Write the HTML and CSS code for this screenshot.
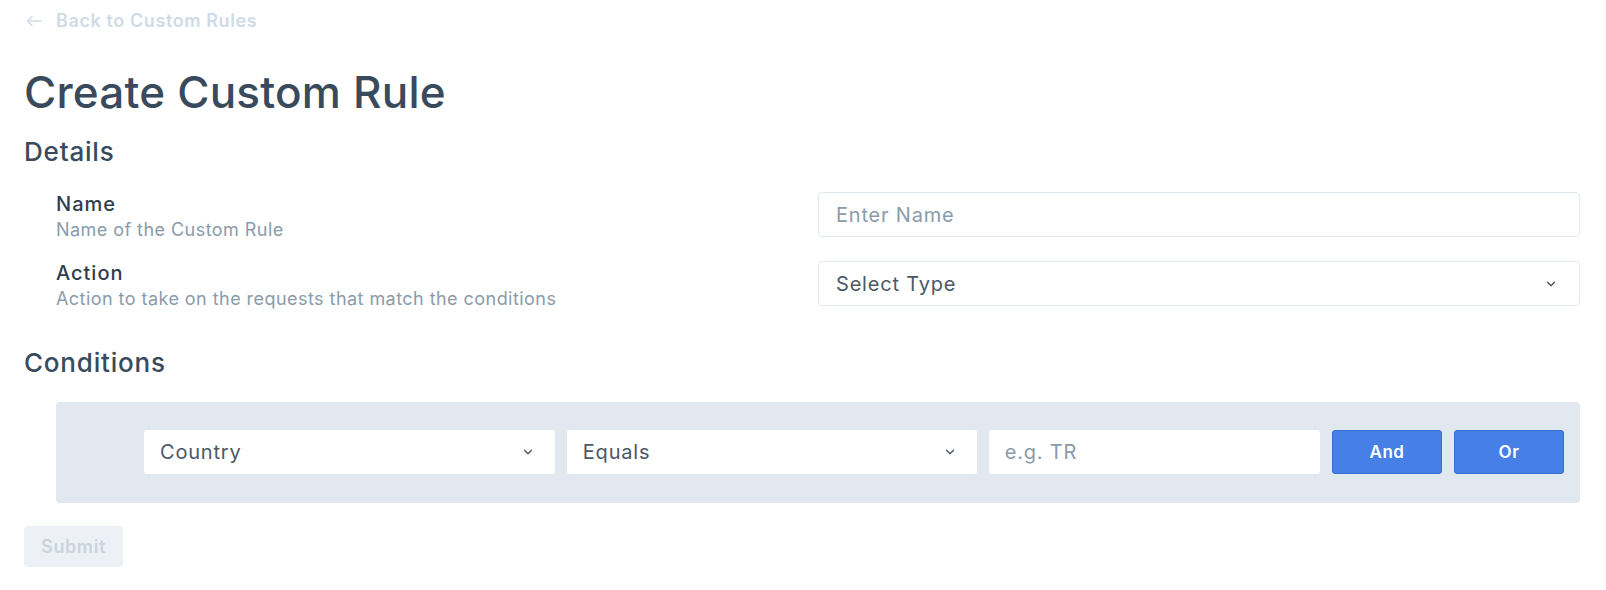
FILE: index.html
```html
<!DOCTYPE html>
<html lang="en">
<head>
<meta charset="utf-8">
<title>Create Custom Rule</title>
<link rel="stylesheet" href="styles.css">
</head>
<body>
<div class="page">
  <a class="back" href="#">
    <svg class="back-arrow" width="16" height="12" viewBox="0 0 16 12" aria-hidden="true"><path d="M15 6H1.5M6 1.5L1.5 6L6 10.5" fill="none" stroke="currentColor" stroke-width="1.5" stroke-linecap="round" stroke-linejoin="round"/></svg>
    <span>Back to Custom Rules</span>
  </a>
  <h1 class="title">Create Custom Rule</h1>

  <h2 class="section details-title">Details</h2>
  <div class="details">
    <div class="row">
      <div class="field-info">
        <div class="field-label">Name</div>
        <div class="field-hint">Name of the Custom Rule</div>
      </div>
      <div class="field-control">
        <div class="input"><span class="placeholder">Enter Name</span></div>
      </div>
    </div>
    <div class="row">
      <div class="field-info">
        <div class="field-label">Action</div>
        <div class="field-hint">Action to take on the requests that match the conditions</div>
      </div>
      <div class="field-control">
        <div class="input select"><span class="value">Select Type</span>
          <svg class="chev" width="10" height="6" viewBox="0 0 10 6" aria-hidden="true"><path d="M1.5 1.2L5 4.7L8.5 1.2" fill="none" stroke="currentColor" stroke-width="1.4" stroke-linecap="round" stroke-linejoin="round"/></svg>
        </div>
      </div>
    </div>
  </div>

  <h2 class="section conditions-title">Conditions</h2>
  <div class="conditions">
    <div class="cond-box">
      <div class="cond-field cond-select w-country"><span class="value">Country</span>
        <svg class="chev" width="10" height="6" viewBox="0 0 10 6" aria-hidden="true"><path d="M1.5 1.2L5 4.7L8.5 1.2" fill="none" stroke="currentColor" stroke-width="1.4" stroke-linecap="round" stroke-linejoin="round"/></svg>
      </div>
      <div class="cond-field cond-select w-op"><span class="value">Equals</span>
        <svg class="chev" width="10" height="6" viewBox="0 0 10 6" aria-hidden="true"><path d="M1.5 1.2L5 4.7L8.5 1.2" fill="none" stroke="currentColor" stroke-width="1.4" stroke-linecap="round" stroke-linejoin="round"/></svg>
      </div>
      <div class="cond-field w-val"><span class="placeholder">e.g. TR</span></div>
      <button class="btn-blue">And</button>
      <button class="btn-blue">Or</button>
    </div>
  </div>

  <button class="submit">Submit</button>
</div>
</body>
</html>
```

FILE: styles.css
```css
* { box-sizing: border-box; }

html, body {
  margin: 0;
  padding: 0;
  background: #ffffff;
}

body {
  font-family: "Inter", "Noto Sans", "Liberation Sans", sans-serif;
  color: #3a4b5c;
}

.page {
  padding: 10px 26px 0 24px;
}

.back {
  display: flex;
  align-items: center;
  gap: 14px;
  height: 21px;
  color: #cfdbe6;
  text-decoration: none;
  font-size: 18px;
  font-weight: 600;
  letter-spacing: 0.6px;
}

.back-arrow {
  margin-left: 2px;
  flex: none;
}

.title {
  margin: 36px 0 0 0;
  font-size: 44px;
  line-height: 50px;
  font-weight: 500;
  color: #384a5c;
  letter-spacing: 0.2px;
}

.section {
  margin: 0;
  font-size: 26px;
  line-height: 30px;
  font-weight: 500;
  color: #384a5c;
  letter-spacing: 0.8px;
}

.details-title {
  margin-top: 20px;
}

.details {
  padding-left: 32px;
  margin-top: 25px;
  display: flex;
  flex-direction: column;
  gap: 17px;
}

.row {
  display: grid;
  grid-template-columns: 1fr 1fr;
  align-items: start;
}

.field-info {
  display: flex;
  flex-direction: column;
}

.field-label {
  font-size: 20px;
  line-height: 24px;
  font-weight: 500;
  color: #2f3d4c;
  letter-spacing: 1px;
}

.field-hint {
  font-size: 18px;
  line-height: 28px;
  color: #8a9bab;
  letter-spacing: 0.45px;
}

.input {
  height: 45px;
  border: 1px solid #e2e8f0;
  border-radius: 4px;
  display: flex;
  align-items: center;
  padding: 0 17px;
  font-size: 20px;
  letter-spacing: 0.8px;
  background: #fff;
}

.placeholder { color: #8a9bab; }
.value { color: #4a5868; }

.select {
  justify-content: space-between;
  padding-right: 23px;
}

.chev {
  color: #4a5868;
  flex: none;
}

.conditions-title {
  margin-top: 35px;
}

.conditions {
  padding-left: 32px;
  margin-top: 24px;
}

.cond-box {
  background: #e2e8f0;
  border-radius: 4px;
  padding: 28px 16px 29px 88px;
  display: flex;
  align-items: center;
  gap: 12px;
}

.cond-field {
  height: 44px;
  background: #fff;
  border-radius: 3px;
  display: flex;
  align-items: center;
  padding: 0 16px;
  font-size: 20px;
  letter-spacing: 0.8px;
}

.cond-select {
  justify-content: space-between;
  padding-right: 22px;
}

.w-country { flex: 411 1 0; }
.w-op { flex: 410 1 0; }
.w-val { flex: 330 1 0; }

.btn-blue {
  flex: none;
  width: 110px;
  height: 44px;
  background: #4680e6;
  border: 1px solid #3a6fd2;
  border-radius: 3px;
  color: #ffffff;
  font-family: inherit;
  font-size: 17px;
  font-weight: 600;
  letter-spacing: 0.5px;
}

.submit {
  display: block;
  margin-top: 23px;
  width: 99px;
  height: 41px;
  background: #edf1f6;
  border: none;
  border-radius: 4px;
  color: #c9d4de;
  font-family: inherit;
  font-size: 18px;
  font-weight: 600;
  letter-spacing: 0.6px;
}
```
